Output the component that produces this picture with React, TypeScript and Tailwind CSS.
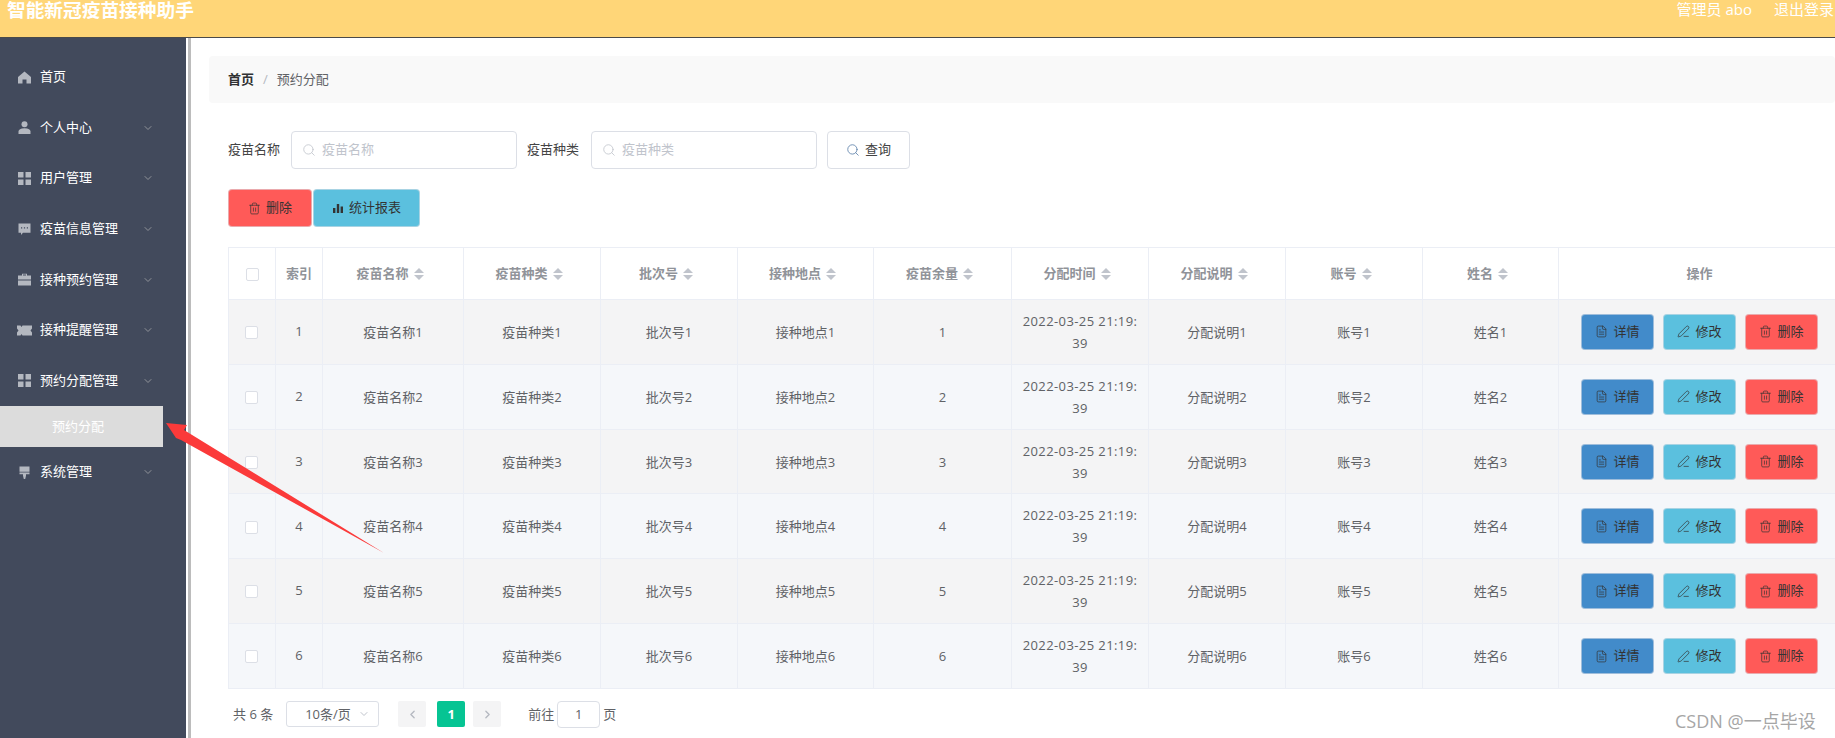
import { ChevronDown, ChevronLeft, ChevronRight, FileText, Search, Trash2, PenLine } from "lucide-react";
import type { ReactNode } from "react";

const iconClass = "w-[13px] h-[13px] shrink-0 fill-[#b4b8c0]";

const HomeIcon = () => (
  <svg viewBox="0 0 13 13" className={iconClass}><path d="M6.5 0.5 13 6v6.5H8.5V8.5h-4v4H0V6z" /></svg>
);
const UserIcon = () => (
  <svg viewBox="0 0 13 13" className={iconClass}><circle cx="6.5" cy="3.2" r="3" /><path d="M0.5 13v-2.5C0.5 8.5 2.5 7.2 6.5 7.2s6 1.3 6 3.3V13z" /></svg>
);
const GridIcon = () => (
  <svg viewBox="0 0 13 13" className={iconClass}><rect width="5.5" height="5.5" /><rect x="7.5" width="5.5" height="5.5" /><rect y="7.5" width="5.5" height="5.5" /><rect x="7.5" y="7.5" width="5.5" height="5.5" /></svg>
);
const ChatIcon = () => (
  <svg viewBox="0 0 13 13" className={iconClass}>
    <path fillRule="evenodd" d="M0.5 0.5h12v9.3H5L3 12V9.8H0.5zM3 4.2v1.2h1.2V4.2zm2.9 0v1.2h1.2V4.2zm2.9 0v1.2H10V4.2z" />
  </svg>
);
const CaseIcon = () => (
  <svg viewBox="0 0 13 13" className={iconClass}>
    <path fillRule="evenodd" d="M4 2.5V0.7h5v1.8h4v4H0v-4zm1-.9v.9h3v-.9zM0 7.4h13V12.5H0z" />
  </svg>
);
const TicketIcon = () => (
  <svg viewBox="0 0 15 11" className="w-[15px] h-[11px] shrink-0 fill-[#b4b8c0] -ml-[1px]">
    <path d="M0 0.5h3.5l1 1.5 1-1.5H15v3l-1.5 2L15 7.5v3H5.5l-1-1.5-1 1.5H0v-3l1.5-2L0 3.5z" />
  </svg>
);
const ToolIcon = () => (
  <svg viewBox="0 0 13 13" className={iconClass}><path d="M1.5 0.5h10v5.2H1.5zM1.5 6.6h10v1.6H8v1.6L7.2 13H5.8L5 9.8V8.2H1.5z" /></svg>
);

const menus: { name: string; icon: ReactNode; arrow?: boolean }[] = [
  { name: "首页", icon: <HomeIcon /> },
  { name: "个人中心", icon: <UserIcon />, arrow: true },
  { name: "用户管理", icon: <GridIcon />, arrow: true },
  { name: "疫苗信息管理", icon: <ChatIcon />, arrow: true },
  { name: "接种预约管理", icon: <CaseIcon />, arrow: true },
  { name: "接种提醒管理", icon: <TicketIcon />, arrow: true },
  { name: "预约分配管理", icon: <GridIcon />, arrow: true },
];

const columns = [
  { title: "疫苗名称", width: "w-[141px]" },
  { title: "疫苗种类", width: "w-[137px]" },
  { title: "批次号", width: "w-[137px]" },
  { title: "接种地点", width: "w-[136px]" },
  { title: "疫苗余量", width: "w-[138px]" },
  { title: "分配时间", width: "w-[137px]" },
  { title: "分配说明", width: "w-[137px]" },
  { title: "账号", width: "w-[137px]" },
  { title: "姓名", width: "w-[136px]" },
];

const rows = [1, 2, 3, 4, 5, 6];

const MenuItem = ({ name, icon, arrow }: { name: string; icon: ReactNode; arrow?: boolean }) => (
  <div className="h-[50.6px] flex items-center pl-[18px] pr-[32px]">
    <span className="w-[22px] flex items-center">{icon}</span>
    <span className="flex-1 text-[13px] text-white -mt-[0.5px]">{name}</span>
    {arrow && <ChevronDown size={12} className="text-[#909399]" />}
  </div>
);

const Checkbox = ({ className = "" }: { className?: string }) => (
  <span className={`inline-block w-[13px] h-[13px] bg-white border border-[#dcdfe6] rounded-[2px] align-middle ${className}`} />
);

const SortCaret = () => (
  <span className="inline-flex flex-col gap-[2px] ml-[5px] mr-[6px] align-middle">
    <span className="w-0 h-0 border-x-[5px] border-x-transparent border-b-[5px] border-b-[#c0c4cc]" />
    <span className="w-0 h-0 border-x-[5px] border-x-transparent border-t-[5px] border-t-[#c0c4cc]" />
  </span>
);

const ActionButton = ({ color, icon, label, width }: { color: string; icon: ReactNode; label: string; width: string }) => (
  <button className={`${color} ${width} h-[36px] flex items-center justify-center gap-[5px] rounded-[4px] border border-[#dcdfe6]/60 text-[13px] text-[#333]`}>
    {icon}
    {label}
  </button>
);

const SearchField = ({ placeholder, width }: { placeholder: string; width: string }) => (
  <div className={`${width} h-[38px] flex items-center gap-[6px] pl-[10px] border border-[#dcdfe6] rounded-[4px] bg-white`}>
    <Search size={14} strokeWidth={1.4} className="text-[#c0c4cc] shrink-0" />
    <input placeholder={placeholder} className="w-full min-w-0 text-[13px] outline-none placeholder:text-[#c0c4cc]" />
  </div>
);

export default function App() {
  return (
    <div className="relative h-screen flex flex-col overflow-hidden bg-white font-[Open_Sans,Noto_Sans_CJK_SC,sans-serif]">
      <header className="h-[38px] shrink-0 flex items-start justify-between bg-[#ffd678] border-b border-[#4a4a4a] pl-[7px] text-white">
        <h1 className="text-[18.7px] font-bold leading-[19px]">智能新冠疫苗接种助手</h1>
        <div className="flex gap-[22px] text-[15px] leading-[19px] mr-[1px]">
          <span>管理员 abo</span>
          <span>退出登录</span>
        </div>
      </header>

      <div className="flex-1 flex min-h-0">
        <aside className="w-[186px] shrink-0 bg-[#424a5c] pt-[14px]">
          {menus.map((m) => (
            <MenuItem key={m.name} {...m} />
          ))}
          <div className="w-[163px] h-[41px] flex items-center pl-[52px] bg-[#dcdcdc] text-[13px] text-white">预约分配</div>
          <MenuItem name="系统管理" icon={<ToolIcon />} arrow />
        </aside>
        <div className="w-[3px] ml-[2px] shrink-0 bg-[#bcbcbc]" />

        <main className="flex-1 min-w-0 overflow-hidden pl-[18px] pt-[18px]">
          <nav className="h-[47px] flex items-center pl-[19px] bg-[#f9f9f9] rounded-[4px] text-[13px]">
            <span className="font-bold text-[#303133]">首页</span>
            <span className="ml-[9px] mr-[9px] text-[#b4b8c0]">/</span>
            <span className="text-[#606266]">预约分配</span>
          </nav>

          <div className="pl-[19px]">
            <div className="mt-[28px] flex items-center text-[13px] text-[#444]">
              <span className="mr-[11px]">疫苗名称</span>
              <SearchField placeholder="疫苗名称" width="w-[226px]" />
              <span className="ml-[10px] mr-[12px]">疫苗种类</span>
              <SearchField placeholder="疫苗种类" width="w-[226px]" />
              <button className="ml-[10px] w-[83px] h-[38px] flex items-center justify-center gap-[5px] border border-[#dcdfe6] rounded-[4px] text-[#444]">
                <Search size={14} strokeWidth={1.4} className="text-[#5a7ea8]" />
                查询
              </button>
            </div>

            <div className="mt-[20px] flex gap-[1px]">
              <ActionButton color="bg-[#ff5a58]" width="w-[84px] h-[38px]" label="删除" icon={<Trash2 size={13} strokeWidth={1.3} />} />
              <ActionButton
                color="bg-[#5bc0de]"
                width="w-[107px] h-[38px]"
                label="统计报表"
                icon={
                  <svg viewBox="0 0 12 12" className="w-[12px] h-[12px] fill-[#333]">
                    <rect x="1" y="6" width="2.4" height="5" />
                    <rect x="4.8" y="2" width="2.4" height="9" />
                    <rect x="8.6" y="4.5" width="2.4" height="6.5" />
                  </svg>
                }
              />
            </div>

            <table className="mt-[20px] w-[1612px] table-fixed border-collapse text-[13px] text-[#606266] text-center">
              <colgroup>
                <col className="w-[47px]" />
                <col className="w-[47px]" />
                {columns.map((c) => (
                  <col key={c.title} className={c.width} />
                ))}
                <col className="w-[282px]" />
              </colgroup>
              <thead>
                <tr className="h-[52px] bg-white text-[#909399]">
                  <th className="border border-[#ebeef5]"><Checkbox className="ml-[1px]" /></th>
                  <th className="border border-[#ebeef5] font-semibold">索引</th>
                  {columns.map((c) => (
                    <th key={c.title} className="border border-[#ebeef5] font-semibold">
                      {c.title}
                      <SortCaret />
                    </th>
                  ))}
                  <th className="border border-[#ebeef5] font-semibold">操作</th>
                </tr>
              </thead>
              <tbody>
                {rows.map((n) => (
                  <tr key={n} className={`h-[64.83px] ${n % 2 ? "bg-[#f4f4f5]" : "bg-[#f5f7fa]"}`}>
                    <td className="border border-[#ebeef5]"><Checkbox className="-ml-[2px]" /></td>
                    <td className="border border-[#ebeef5]">{n}</td>
                    {columns.map((c) => (
                      <td key={c.title} className="border border-[#ebeef5] px-[10px] leading-[22px]">
                        {c.title === "疫苗余量" ? (
                          n
                        ) : c.title === "分配时间" ? (
                          <span className="tracking-[0.4px]">
                            2022-03-25 21:19:
                            <br />
                            39
                          </span>
                        ) : (
                          `${c.title}${n}`
                        )}
                      </td>
                    ))}
                    <td className="border border-[#ebeef5]">
                      <div className="flex justify-center gap-[9px]">
                        <ActionButton color="bg-[#428bca]" width="w-[73px]" label="详情" icon={<FileText size={13} strokeWidth={1.3} />} />
                        <ActionButton color="bg-[#5bc0de]" width="w-[73px]" label="修改" icon={<PenLine size={13} strokeWidth={1.3} />} />
                        <ActionButton color="bg-[#ff5a58]" width="w-[73px]" label="删除" icon={<Trash2 size={13} strokeWidth={1.3} />} />
                      </div>
                    </td>
                  </tr>
                ))}
              </tbody>
            </table>

            <div className="mt-[12px] flex items-center text-[13px] text-[#606266]">
              <span className="ml-[5px] mr-[13px]">共 6 条</span>
              <div className="w-[93px] h-[26px] flex items-center justify-between pl-[18px] pr-[8px] border border-[#dcdfe6] rounded-[3px]">
                10条/页
                <ChevronDown size={12} className="text-[#c0c4cc]" />
              </div>
              <span className="ml-[19px] w-[28px] h-[26px] flex items-center justify-center bg-[#f4f4f5] rounded-[2px] text-[#b4b8c0]"><ChevronLeft size={13} strokeWidth={2.5} /></span>
              <span className="ml-[11px] w-[28px] h-[26px] flex items-center justify-center bg-[#06c493] rounded-[2px] text-white font-bold">1</span>
              <span className="ml-[8px] w-[28px] h-[26px] flex items-center justify-center bg-[#f4f4f5] rounded-[2px] text-[#b4b8c0]"><ChevronRight size={13} strokeWidth={2.5} /></span>
              <span className="ml-[27px]">前往</span>
              <span className="ml-[3px] w-[43px] h-[27px] flex items-center justify-center border border-[#dcdfe6] rounded-[4px]">1</span>
              <span className="ml-[3px]">页</span>
            </div>
          </div>
        </main>
      </div>

      {/* annotation arrow over the page */}
      <svg className="absolute left-0 top-0 w-[1835px] h-[738px] pointer-events-none" viewBox="0 0 1835 738">
        <polygon points="166,423 187,425 184,430 384,553 181,440 176,438" fill="#fb3a3a" />
      </svg>
      <span className="absolute left-[1675px] top-[710px] text-[18px] leading-[22px] text-[#a6a6a6]">CSDN @一点毕设</span>
    </div>
  );
}
